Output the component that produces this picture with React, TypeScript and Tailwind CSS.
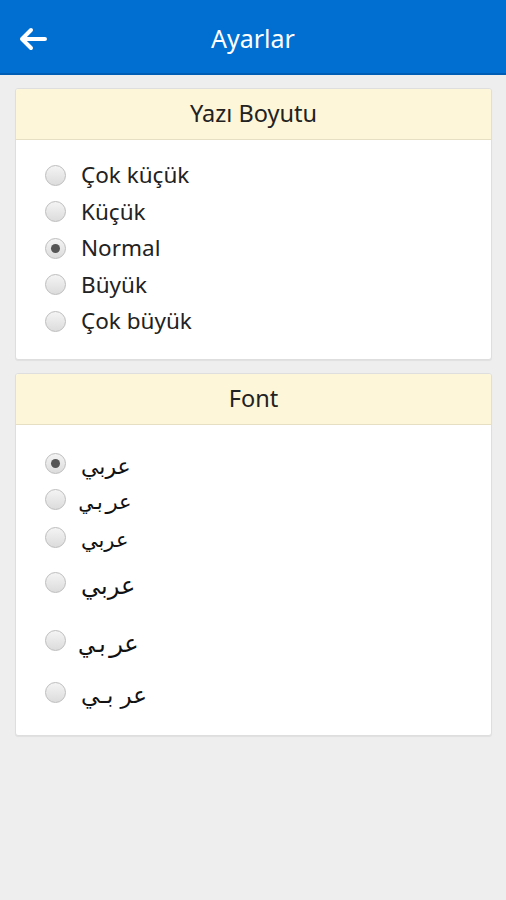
const sizes = ['Çok küçük', 'Küçük', 'Normal', 'Büyük', 'Çok büyük']

const fonts = [
  { cls: 'text-[22px] h-[36px]', font: "'DejaVu Sans', sans-serif", text: 'عربي' },
  { cls: 'text-[21px] h-[36px]', font: "'DejaVu Sans Mono', monospace", text: 'عربي' },
  { cls: 'text-[21px] h-[40px]', font: "'DejaVu Sans', sans-serif", text: 'عربي' },
  { cls: 'text-[24px] h-[50px]', font: "'DejaVu Sans', sans-serif", text: 'عربي' },
  { cls: 'text-[24px] h-[66px]', font: "'DejaVu Sans Mono', monospace", text: 'عربي' },
  { cls: 'text-[23px] h-[38px]', font: "'DejaVu Sans', sans-serif", text: 'عر بـي' },
]

function Radio({ checked }: { checked?: boolean }) {
  return (
    <span className="w-[21px] h-[21px] rounded-full border border-[#bdbdbd] bg-gradient-to-b from-[#f4f4f4] to-[#dcdcdc] flex items-center justify-center shrink-0">
      {checked && <span className="w-[9px] h-[9px] rounded-full bg-[#555]" />}
    </span>
  )
}

function Card({ title, children }: { title: string; children: React.ReactNode }) {
  return (
    <div className="bg-white border border-[#dedede] rounded-[3px] shadow-[0_1px_1px_rgba(0,0,0,0.06)] overflow-hidden">
      <div className="h-[51px] bg-[#fdf6d9] border-b border-[#e6dfc4] flex items-center justify-center text-[23.5px] text-[#222]">
        {title}
      </div>
      {children}
    </div>
  )
}

export default function App() {
  return (
    <div className="w-[506px] h-[900px] bg-[#eeeeee] font-['Noto_Sans','Open_Sans',sans-serif]">
      <div className="h-[75px] bg-[#006fd1] border-b-2 border-[#005db4] flex items-center relative">
        <svg className="absolute left-[18px] top-[27px]" width="30" height="24" viewBox="0 0 30 24" fill="none" stroke="white" strokeWidth="4" strokeLinecap="round" strokeLinejoin="round">
          <path d="M27 12H4M13 3L4 12l9 9" />
        </svg>
        <div className="flex-1 text-center text-white text-[25px] mt-[4px]">Ayarlar</div>
      </div>

      <div className="pl-[15px] pr-[14px] pt-[13px] flex flex-col gap-[13px]">
        <Card title="Yazı Boyutu">
          <div className="pt-[17px] pb-[19px]">
            {sizes.map((s) => (
              <div key={s} className="flex items-center h-[36.5px] pl-[29px] gap-[15px] text-[22.5px] text-[#222]">
                <Radio checked={s === 'Normal'} />
                <span>{s}</span>
              </div>
            ))}
          </div>
        </Card>

        <Card title="Font">
          <div className="pt-[21px] pb-[23px]">
            {fonts.map((f, i) => (
              <div key={i} className={`flex items-center pl-[29px] gap-[15px] text-[#111] ${f.cls}`}>
                <Radio checked={i === 0} />
                <span style={{ fontFamily: f.font }} className="leading-none mt-[6px]">{f.text}</span>
              </div>
            ))}
          </div>
        </Card>
      </div>
    </div>
  )
}
